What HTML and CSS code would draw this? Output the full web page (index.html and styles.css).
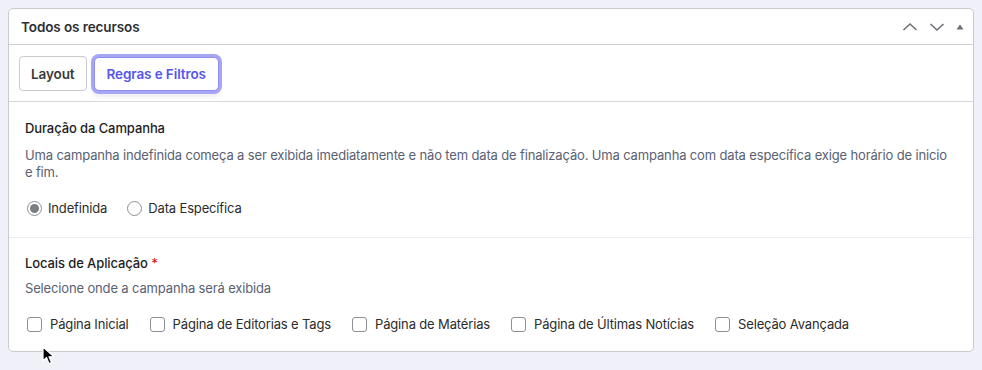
FILE: index.html
```html
<!DOCTYPE html>
<html lang="pt-BR">
<head>
  <meta charset="UTF-8">
  <meta name="viewport" content="width=device-width, initial-scale=1.0">
  <title>Todos os recursos</title>
  <link rel="stylesheet" href="styles.css">
</head>
<body>
  <div class="panel">
    <div class="panel-header">
      <h2>Todos os recursos</h2>
      <div class="panel-controls">
        <svg width="16" height="16" viewBox="0 0 16 16"><path d="M1.5 11 L8 5 L14.5 11" fill="none" stroke="#6c7075" stroke-width="1.6"/></svg>
        <svg width="16" height="16" viewBox="0 0 16 16"><path d="M1.5 5 L8 11 L14.5 5" fill="none" stroke="#6c7075" stroke-width="1.6"/></svg>
        <svg width="8" height="8" viewBox="0 0 8 8"><path d="M0.5 6.5 L4 1.5 L7.5 6.5 Z" fill="#6c7075"/></svg>
      </div>
    </div>

    <div class="tabs">
      <button class="tab">Layout</button>
      <button class="tab active">Regras e Filtros</button>
    </div>

    <div class="section">
      <h3>Duração da Campanha</h3>
      <p class="help">Uma campanha indefinida começa a ser exibida imediatamente e não tem data de finalização. Uma campanha com data específica exige horário de inicio e fim.</p>
      <div class="options">
        <label class="opt"><span class="radio checked"></span>Indefinida</label>
        <label class="opt"><span class="radio"></span>Data Específica</label>
      </div>
    </div>

    <div class="section last">
      <h3>Locais de Aplicação <span class="req">*</span></h3>
      <p class="help">Selecione onde a campanha será exibida</p>
      <div class="options checks">
        <label class="opt"><span class="check"></span>Página Inicial</label>
        <label class="opt"><span class="check"></span>Página de Editorias e Tags</label>
        <label class="opt"><span class="check"></span>Página de Matérias</label>
        <label class="opt"><span class="check"></span>Página de Últimas Notícias</label>
        <label class="opt"><span class="check"></span>Seleção Avançada</label>
      </div>
    </div>
  </div>

  <svg class="cursor" width="14" height="20" viewBox="0 0 14 20">
    <path d="M1 1 L1 15 L4.5 11.5 L7 17.5 L9.5 16.5 L7 10.8 L12 10.8 Z" fill="#000" stroke="#fff" stroke-width="1.2" stroke-linejoin="round"/>
  </svg>
</body>
</html>
```

FILE: styles.css
```css
* {
  margin: 0;
  padding: 0;
  box-sizing: border-box;
  font-family: Inter, 'Noto Sans', sans-serif;
}

body {
  background: #f0f0f8;
  color: #1e1e1e;
  padding: 8px;
  position: relative;
  height: 370px;
}

.panel {
  width: 966px;
  background: #fff;
  border: 1px solid #c9cacd;
  border-radius: 5px;
}

.panel-header {
  height: 36px;
  padding: 0 12px;
  display: flex;
  align-items: center;
  justify-content: space-between;
  border-bottom: 1px solid #d0d1d4;
}

.panel-header h2 {
  font-size: 13.5px;
  font-weight: 600;
  color: #2c3035;
  letter-spacing: -0.1px;
}

.panel-controls {
  display: flex;
  align-items: center;
  gap: 11px;
  margin-right: -3px;
}

.tabs {
  display: flex;
  align-items: center;
  gap: 7px;
  padding: 11px 10px 10px;
  border-bottom: 1px solid #d6d7d9;
}

.tab {
  font-size: 13.5px;
  font-weight: 600;
  color: #3a3a3a;
  background: #fff;
  border: 1px solid #c9cacd;
  border-radius: 4px;
  padding: 0 11px;
  height: 35px;
  cursor: pointer;
  white-space: nowrap;
  letter-spacing: -0.1px;
}

.tab.active {
  color: #5555ee;
  border: 1px solid #8f8ff0;
  box-shadow: 0 0 0 3px #a6a6f5, 0 5px 4px 2px #f1f1f3;
  border-radius: 5px;
  padding: 0 12px;
  height: 34px;
}

.section {
  padding: 17px 16px 20px;
  border-bottom: 1px solid #ececef;
}

.section.last {
  border-bottom: none;
  padding-top: 16px;
  padding-bottom: 18px;
}

.section h3 {
  font-size: 13px;
  font-weight: 500;
  color: #1e1e1e;
  line-height: 18px;
  letter-spacing: -0.1px;
}

.req {
  color: #e01b1b;
}

.help {
  font-size: 13px;
  color: #596173;
  line-height: 17px;
  margin-top: 10px;
  letter-spacing: -0.15px;
}

.section.last .help {
  margin-top: 8px;
}

.options {
  display: flex;
  gap: 18px;
  margin-top: 18px;
}

.options.checks {
  gap: 19px;
  margin-top: 18px;
}

.opt {
  display: flex;
  align-items: center;
  font-size: 13px;
  color: #2c2c2c;
  line-height: 18px;
  gap: 6px;
  letter-spacing: -0.15px;
}

.checks .opt {
  gap: 8px;
}

.radio {
  width: 15px;
  height: 15px;
  border: 1px solid #8c8f94;
  border-radius: 50%;
  display: flex;
  align-items: center;
  justify-content: center;
  margin-left: 2px;
}

.radio.checked::after {
  content: '';
  width: 9px;
  height: 9px;
  border-radius: 50%;
  background: #7a7d82;
}

.check {
  width: 15px;
  height: 15px;
  border: 1px solid #8c8f94;
  border-radius: 3px;
  margin-left: 2px;
}

.cursor {
  position: absolute;
  left: 42px;
  top: 346px;
}
```
